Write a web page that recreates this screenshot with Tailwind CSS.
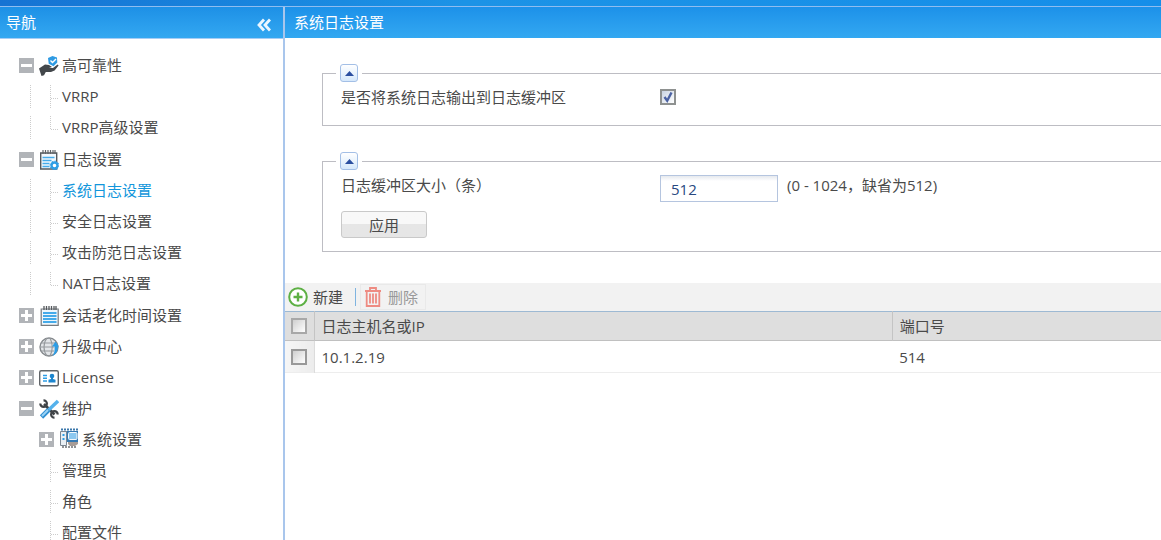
<!DOCTYPE html>
<html lang="zh-CN">
    <head>
        <meta charset="UTF-8" />
        <meta name="viewport" content="width=device-width, initial-scale=1.0" />
        <title>系统日志设置</title>
        <script src="https://cdn.jsdelivr.net/npm/@tailwindcss/browser@4"></script>
    </head>
    <body class="flex h-screen flex-col overflow-hidden bg-white font-['Open_Sans','Noto_Sans_CJK_SC',sans-serif] text-[15px] leading-5 text-[#4a4a4a]">
        <!-- shared symbols -->
        <svg class="hidden">
            <symbol id="minus" viewBox="0 0 15 15"><path fill="#b1b4b8" d="M0 0h15v15H0z" /><path fill="#fff" d="M2 6h11v3H2z" /></symbol>
            <symbol id="plus" viewBox="0 0 15 15"><path fill="#b1b4b8" d="M0 0h15v15H0z" /><path fill="#fff" d="M2 6h4V2h3v4h4v3H9v4H6V9H2z" /></symbol>
            <symbol id="line" viewBox="0 0 1 24"><path stroke="#ccc" stroke-dasharray="1 1" d="M.5 0v24" /></symbol>
            <symbol id="tee" viewBox="0 0 9 24"><path stroke="#ccc" stroke-dasharray="1 1" d="M.5 0v24M1 13.5h8" /></symbol>
            <symbol id="elbow" viewBox="0 0 9 24"><path stroke="#ccc" stroke-dasharray="1 1" d="M.5 0v14M1 13.5h8" /></symbol>
        </svg>

        <div class="h-[6px] shrink-0 bg-linear-to-r from-[#1673d3] via-[#1c93e6] via-40% to-[#158ee9]"></div>

        <div class="flex min-h-0 grow border-t border-[#8fbdf0]">
            <!-- navigation -->
            <nav class="flex w-[283px] shrink-0 flex-col overflow-hidden">
                <header class="flex h-8 shrink-0 items-center justify-between border-b border-[#a5cdf5] bg-linear-to-b from-[#1d90e6] to-[#33a8f1] pr-3 pl-[6px] text-white">
                    <h2 class="pb-[2px]">导航</h2>
                    <button type="button" aria-label="收起" class="pt-1">
                        <svg class="size-[14px]" viewBox="0 0 14 14" fill="none" stroke="#eaf6ff" stroke-width="2.8"><path d="M7 1.5 2 7l5 5.500M13 1.500 8 7l5 5.500" /></svg>
                    </button>
                </header>

                <ul class="pt-[11px] whitespace-nowrap [&_a]:pb-[2px]">
                    <li>
                        <div class="flex h-[31px] items-center pl-[19px]">
                            <button type="button" aria-label="折叠" class="mr-[5px]"><svg class="size-[15px]"><use href="#minus" /></svg></button>
                            <svg class="mr-[3px] size-5" viewBox="0 0 20 20">
                                <path fill="#2f9be3" d="m9 2 4.5-2L18 1.5l.3 5-3.8 3.7-4.8-2.5z" />
                                <path fill="none" stroke="#fff" stroke-width="1.4" d="m11.5 4.5 2 2L17 3" />
                                <path fill="#43474b" d="M0 12.5 6 8.6l4 .3 3 2-3 1 4 .1 4.6-3.4 1 .8-4 5.2-3.6 1.5-5.2-.1L5 19.3 2.5 20z" />
                            </svg>
                            <a href="#">高可靠性</a>
                        </div>
                        <ul class="pb-px">
                            <li class="flex h-[31px] items-center pl-[30px]">
                                <svg class="mr-[19px] h-6 w-px"><use href="#line" /></svg>
                                <svg class="mr-[3px] h-6 w-[9px]"><use href="#tee" /></svg>
                                <a href="#">VRRP</a>
                            </li>
                            <li class="flex h-[31px] items-center pl-[30px]">
                                <svg class="mr-[19px] h-6 w-px"><use href="#line" /></svg>
                                <svg class="mr-[3px] h-6 w-[9px]"><use href="#elbow" /></svg>
                                <a href="#">VRRP高级设置</a>
                            </li>
                        </ul>
                    </li>
                    <li>
                        <div class="flex h-[31px] items-center pl-[19px]">
                            <button type="button" aria-label="折叠" class="mr-[5px]"><svg class="size-[15px]"><use href="#minus" /></svg></button>
                            <svg class="mr-[3px] size-5" viewBox="0 0 20 20">
                                <path fill="#f3f8fc" stroke="#55595d" stroke-width="1.4" d="M1.7 3h16v16h-16z" />
                                <path stroke="#606468" stroke-width="1.2" d="M4 0v4M6.5 0v4M9 0v4M11.5 0v4M14 0v4M16 0v4" />
                                <path stroke="#45abea" stroke-width="1.6" d="M3.5 7.5h12M3.5 10.5h9M3.5 13.5h7M3.5 16.5h7" />
                                <circle cx="15.5" cy="15.5" r="3" fill="#fff" stroke="#2f9fe6" stroke-width="2.4" />
                                <circle cx="15.5" cy="15.5" r="4.4" fill="none" stroke="#2f9fe6" stroke-dasharray="1.7 1.7" />
                            </svg>
                            <a href="#">日志设置</a>
                        </div>
                        <ul class="pb-px">
                            <li class="flex h-[31px] items-center pl-[30px]">
                                <svg class="mr-[19px] h-6 w-px"><use href="#line" /></svg>
                                <svg class="mr-[3px] h-6 w-[9px]"><use href="#tee" /></svg>
                                <a href="#" aria-current="page" class="text-[#1296db]">系统日志设置</a>
                            </li>
                            <li class="flex h-[31px] items-center pl-[30px]">
                                <svg class="mr-[19px] h-6 w-px"><use href="#line" /></svg>
                                <svg class="mr-[3px] h-6 w-[9px]"><use href="#tee" /></svg>
                                <a href="#">安全日志设置</a>
                            </li>
                            <li class="flex h-[31px] items-center pl-[30px]">
                                <svg class="mr-[19px] h-6 w-px"><use href="#line" /></svg>
                                <svg class="mr-[3px] h-6 w-[9px]"><use href="#tee" /></svg>
                                <a href="#">攻击防范日志设置</a>
                            </li>
                            <li class="flex h-[31px] items-center pl-[30px]">
                                <svg class="mr-[19px] h-6 w-px"><use href="#line" /></svg>
                                <svg class="mr-[3px] h-6 w-[9px]"><use href="#elbow" /></svg>
                                <a href="#">NAT日志设置</a>
                            </li>
                        </ul>
                    </li>
                    <li class="flex h-[31px] items-center pl-[19px]">
                        <button type="button" aria-label="展开" class="mr-[5px]"><svg class="size-[15px]"><use href="#plus" /></svg></button>
                        <svg class="mr-[3px] size-5" viewBox="0 0 20 20">
                            <path fill="#eef7fd" stroke="#777b7f" stroke-width="1.2" d="M2.2 3h17v16.3h-17z" />
                            <path stroke="#55595d" stroke-width="1.3" d="M5 0v4M7.5 0v4M10 0v4M12.5 0v4M15 0v4M17 0v4" />
                            <path stroke="#45abea" stroke-width="2" d="M4 7h13.5M4 10h13.5M4 13h13.5M4 16h13.5" />
                        </svg>
                        <a href="#">会话老化时间设置</a>
                    </li>
                    <li class="flex h-[31px] items-center pl-[19px]">
                        <button type="button" aria-label="展开" class="mr-[5px]"><svg class="size-[15px]"><use href="#plus" /></svg></button>
                        <svg class="mr-[3px] size-5" viewBox="0 0 20 20" fill="none">
                            <circle cx="10" cy="10" r="9" fill="#e2e5e8" stroke="#85898d" stroke-width="1.4" />
                            <path stroke="#95999d" stroke-width="1.1" d="M2 6h15M1 10h14M2 14h13M8 1C4 6 4 14 8 19M11 1c3 6 3 12 0 18" />
                            <path fill="#2d9de5" d="M13 9.500 16.500 4.500l3.500 5h-1.200c.4 4-1.300 7.500-5.300 9.500 2-3 2.500-6 2-9.500z" />
                        </svg>
                        <a href="#">升级中心</a>
                    </li>
                    <li class="flex h-[31px] items-center pl-[19px]">
                        <button type="button" aria-label="展开" class="mr-[5px]"><svg class="size-[15px]"><use href="#plus" /></svg></button>
                        <svg class="mr-[3px] size-5" viewBox="0 0 20 20">
                            <rect x=".7" y="2.7" width="18.6" height="15" rx="1.5" fill="#fff" stroke="#606468" stroke-width="1.4" />
                            <path stroke="#2d9de5" stroke-width="1.4" d="M4 7.5h4M4 10.2h4M4 13h4" />
                            <circle cx="13" cy="8" r="2.3" fill="#1d86cf" />
                            <path fill="#1d86cf" d="M12 9h2v2l2.5.8v2.7h-7v-2.7L12 11z" />
                        </svg>
                        <a href="#">License</a>
                    </li>
                    <li>
                        <div class="flex h-[31px] items-center pl-[19px]">
                            <button type="button" aria-label="折叠" class="mr-[5px]"><svg class="size-[15px]"><use href="#minus" /></svg></button>
                            <svg class="mr-[3px] size-5" viewBox="0 0 20 20" fill="none">
                                <path stroke="#3f4347" stroke-width="2.6" d="m5 5 10.5 10.5" />
                                <path stroke="#3f4347" stroke-width="2.2" d="M1.300 4.500a3.300 3.300 0 1 0 3.200-3.200M18.700 15.500a3.300 3.300 0 1 0-3.200 3.200" />
                                <path stroke="#55b2ec" stroke-width="3.4" d="M19 2 9.500 11" />
                                <path stroke="#2f8fd2" stroke-width="4.6" d="m9.500 11-7 7" />
                                <path stroke="#9bd2f5" stroke-width="2" d="m9 11-6 6" />
                            </svg>
                            <a href="#">维护</a>
                        </div>
                        <ul>
                            <li class="flex h-[31px] items-center pl-[39px]">
                                <button type="button" aria-label="展开" class="mr-[5px]"><svg class="size-[15px]"><use href="#plus" /></svg></button>
                                <svg class="mr-[3px] mb-1 size-5" viewBox="0 0 20 20">
                                    <path stroke="#3c78ab" stroke-width="2" stroke-dasharray="2 1" d="M2 1.500h17" />
                                    <path fill="#3579b3" d="M2 3h17v11H2z" />
                                    <path fill="#e9eff4" stroke="#7c8792" d="M1.500 3.500h6v14h-6z" />
                                    <path fill="#2d9de5" d="M3.500 6h2v2h-2zM3.500 10h2v2h-2z" />
                                    <rect x="9.5" y="4.5" width="8.5" height="7" rx="1" fill="#8cc8f0" stroke="#f4f8fb" />
                                    <path fill="#a89c96" d="M9 14h10v2l-3 2h-5l-2-2z" />
                                    <path stroke="#6c6f73" stroke-dasharray="2 1" stroke-width="1.5" d="M3 19h14" />
                                </svg>
                                <a href="#">系统设置</a>
                            </li>
                            <li class="flex h-[31px] items-center pl-[50px]">
                                <svg class="mr-[3px] h-6 w-[9px]"><use href="#tee" /></svg>
                                <a href="#">管理员</a>
                            </li>
                            <li class="flex h-[31px] items-center pl-[50px]">
                                <svg class="mr-[3px] h-6 w-[9px]"><use href="#tee" /></svg>
                                <a href="#">角色</a>
                            </li>
                            <li class="flex h-[31px] items-center pl-[50px]">
                                <svg class="mr-[3px] h-6 w-[9px]"><use href="#tee" /></svg>
                                <a href="#">配置文件</a>
                            </li>
                        </ul>
                    </li>
                </ul>
            </nav>

            <!-- content -->
            <main class="flex min-w-0 grow flex-col border-l-2 border-[#a9c6ec]">
                <header class="flex h-[31px] shrink-0 items-center bg-linear-to-b from-[#1c91e9] to-[#33a8f1] pl-[9px] text-white">
                    <h1 class="pb-[2px]">系统日志设置</h1>
                </header>

                <form class="flex flex-col gap-[26px] pt-[26px] pb-[31px] pl-[37px]" onsubmit="return false">
                    <fieldset class="border border-r-0 border-[#bdbdc3] pb-[13px] pl-[13px]">
                        <legend class="px-1">
                            <button type="button" aria-label="收起" class="flex size-[18px] items-center justify-center rounded-[3px] border border-[#a3bfe6] bg-linear-to-b from-white to-[#d5e8fb]">
                                <svg class="h-[5px] w-[9px]" viewBox="0 0 9 5"><path fill="#2b4fa0" d="M0 5 4.500 0 9 5z" /></svg>
                            </button>
                        </legend>
                        <div class="flex items-center pt-[5px] pb-[5px] pl-[5px]">
                            <label for="to-buffer" class="w-[319px]">是否将系统日志输出到日志缓冲区</label>
                            <span class="relative size-4">
                                <input id="to-buffer" type="checkbox" checked class="peer block size-4 appearance-none border-2 border-[#8e9190] bg-linear-to-br from-[#c9d3e2] to-white" />
                                <svg class="pointer-events-none absolute inset-0 hidden size-4 peer-checked:block" viewBox="0 0 16 16" fill="none" stroke="#4b62a3" stroke-width="2.4"><path d="m4.500 8 2.700 3.700L11.500 3.500" /></svg>
                            </span>
                        </div>
                    </fieldset>

                    <fieldset class="border border-r-0 border-[#bdbdc3] pb-[13px] pl-[13px]">
                        <legend class="px-1">
                            <button type="button" aria-label="收起" class="flex size-[18px] items-center justify-center rounded-[3px] border border-[#a3bfe6] bg-linear-to-b from-white to-[#d5e8fb]">
                                <svg class="h-[5px] w-[9px]" viewBox="0 0 9 5"><path fill="#2b4fa0" d="M0 5 4.500 0 9 5z" /></svg>
                            </button>
                        </legend>
                        <div class="flex items-start pt-[5px] pl-[5px]">
                            <label for="size" class="w-[319px]">日志缓冲区大小（条）</label>
                            <input id="size" type="text" value="512" class="h-[27px] w-[118px] border border-[#b5c5df] bg-linear-to-b from-[#e6e9ee] to-white to-20% px-[10px] text-[#28487f] outline-none" />
                            <span class="pl-[9px]">(0 - 1024，缺省为512)</span>
                        </div>
                        <button type="submit" class="mt-[9px] ml-[5px] block h-[27px] w-[86px] rounded-[3px] border border-[#c9c9c9] bg-linear-to-b from-[#f8f8f8] from-50% to-[#e6e6e6] to-50%">应用</button>
                    </fieldset>
                </form>

                <div class="flex h-7 shrink-0 items-center bg-[#f2f2f2] pl-[3px]">
                    <button type="button" class="flex items-center gap-[5px] pr-3">
                        <svg class="size-5" viewBox="0 0 20 20" fill="none" stroke="#5db044" stroke-width="2"><circle cx="10" cy="10" r="8.8" fill="#fff" /><path d="M10 5.500v9M5.500 10h9" stroke-width="2.4" /></svg>
                        新建
                    </button>
                    <span class="h-[18px] w-px bg-[#7fb4e0]"></span>
                    <button type="button" disabled class="ml-1 flex h-[26px] items-center gap-[6px] border border-[#e9e9e9] px-[3px] pr-[7px] text-[#999]">
                        <svg class="h-5 w-[18px]" viewBox="0 0 18 20" fill="none" stroke="#ee8b82" stroke-width="1.8"><path d="M1 4h16M6 3.500V1h6v2.500M2.700 4v15h12.600V4M6 6.500v10M9 6.500v10M12 6.500v10" /></svg>
                        删除
                    </button>
                </div>

                <table class="w-full table-fixed border-t border-[#9db9d3] text-left">
                    <colgroup>
                        <col class="w-[29px]" />
                        <col class="w-[66%]" />
                        <col />
                    </colgroup>
                    <thead>
                        <tr class="h-[29px] border-b border-[#c0c0c0] bg-[#dedede]">
                            <th class="border-r border-[#c4c4c4] pl-[6px]"><input type="checkbox" aria-label="全选" class="block size-4 appearance-none border-2 border-[#a8a8a8] bg-linear-to-br from-[#cfcfcf] to-white" /></th>
                            <th class="border-r border-[#c4c4c4] pl-[7px] font-normal">日志主机名或IP</th>
                            <th class="pl-[7px] font-normal">端口号</th>
                        </tr>
                    </thead>
                    <tbody>
                        <tr class="h-8 border-b border-[#ededed]">
                            <td class="border-r border-[#dcdcdc] bg-linear-to-r from-[#f6f6f6] to-[#ececec] pl-[6px]"><input type="checkbox" aria-label="选择 10.1.2.19" class="block size-4 appearance-none border-2 border-[#999] bg-linear-to-br from-[#cfcfcf] to-white" /></td>
                            <td class="pl-[7px]">10.1.2.19</td>
                            <td class="pl-[7px]">514</td>
                        </tr>
                    </tbody>
                </table>
            </main>
        </div>
    </body>
</html>
